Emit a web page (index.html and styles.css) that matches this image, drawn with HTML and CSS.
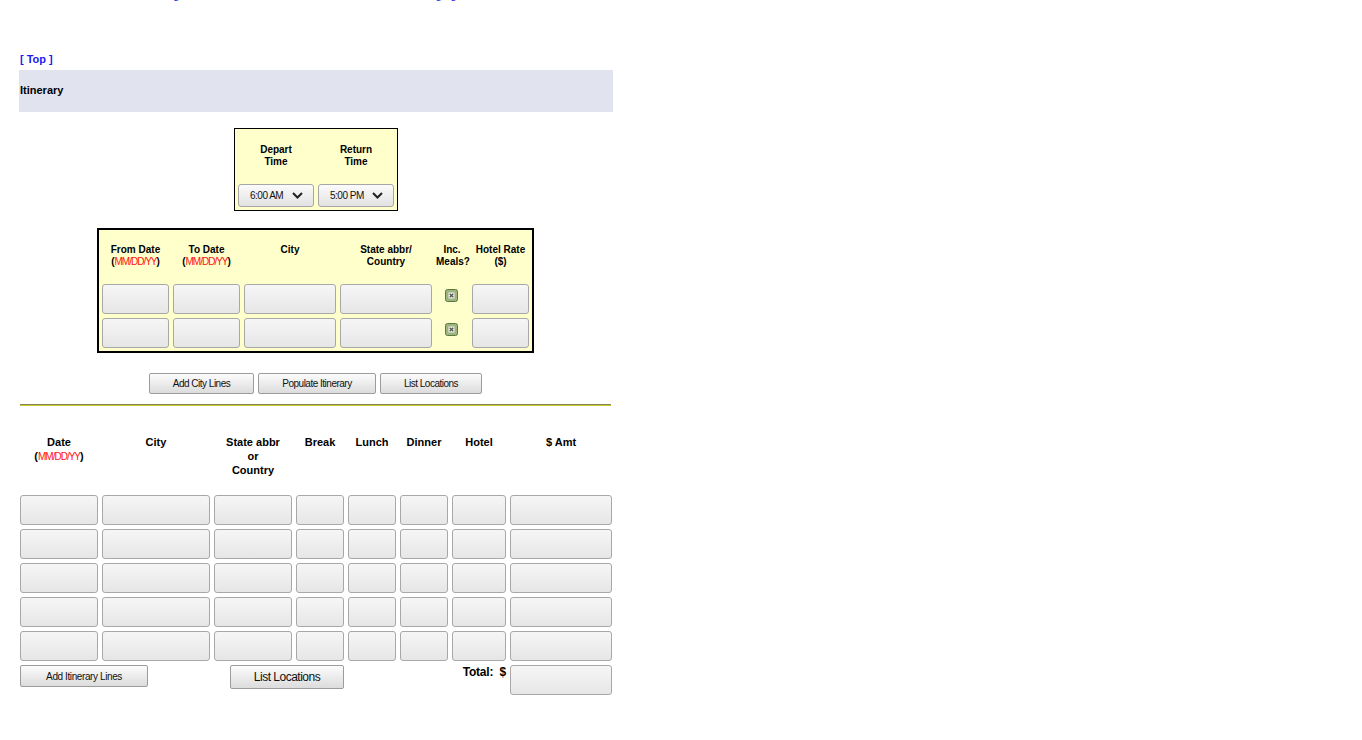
FILE: index.html
```html
<!DOCTYPE html>
<html>
<head>
<meta charset="utf-8">
<title>Itinerary</title>
<link rel="stylesheet" href="styles.css">
</head>
<body>
<div class="page">
  <div class="toplinks">
    <a class="tl tl1" href="#">Mileage</a>
    <a class="tl tl2" href="#">Per Diem</a>
    <a class="tl tl3" href="#">Lodging</a>
  </div>

  <div class="toplink"><a href="#">[ Top ]</a></div>

  <div class="band">Itinerary</div>

  <div class="timebox">
    <div class="timegrid">
      <div class="th">Depart<br>Time</div>
      <div class="th">Return<br>Time</div>
      <div class="select"><span>6:00 AM</span><svg width="11" height="7" viewBox="0 0 11 7"><path d="M1 1 L5.5 5.5 L10 1" fill="none" stroke="#222" stroke-width="2"/></svg></div>
      <div class="select"><span>5:00 PM</span><svg width="11" height="7" viewBox="0 0 11 7"><path d="M1 1 L5.5 5.5 L10 1" fill="none" stroke="#222" stroke-width="2"/></svg></div>
    </div>
  </div>

  <div class="citybox">
    <div class="citygrid">
      <div class="th">From Date<br>(<span class="fmt">MM/DD/YY</span>)</div>
      <div class="th">To Date<br>(<span class="fmt">MM/DD/YY</span>)</div>
      <div class="th">City</div>
      <div class="th">State abbr/<br>Country</div>
      <div class="th">Inc.<br>Meals?</div>
      <div class="th">Hotel Rate<br>($)</div>

      <input class="fld" type="text"><input class="fld" type="text"><input class="fld" type="text"><input class="fld" type="text">
      <div class="chk"><svg width="13" height="13" viewBox="0 0 13 13"><rect x="0.5" y="0.5" width="12" height="12" rx="2" fill="#9db47f" stroke="#5b7a42"/><rect x="3.5" y="3.5" width="6" height="6" fill="#f0f0ee"/><path d="M4.7 4.7 L8.3 8.3 M8.3 4.7 L4.7 8.3" stroke="#555" stroke-width="1.3"/></svg></div>
      <input class="fld" type="text">

      <input class="fld" type="text"><input class="fld" type="text"><input class="fld" type="text"><input class="fld" type="text">
      <div class="chk"><svg width="13" height="13" viewBox="0 0 13 13"><rect x="0.5" y="0.5" width="12" height="12" rx="2" fill="#9db47f" stroke="#5b7a42"/><rect x="3.5" y="3.5" width="6" height="6" fill="#f0f0ee"/><path d="M4.7 4.7 L8.3 8.3 M8.3 4.7 L4.7 8.3" stroke="#555" stroke-width="1.3"/></svg></div>
      <input class="fld" type="text">
    </div>
  </div>

  <div class="btnrow">
    <button class="btn b1">Add City Lines</button>
    <button class="btn b2">Populate Itinerary</button>
    <button class="btn b3">List Locations</button>
  </div>

  <div class="rule"></div>

  <div class="itgrid">
    <div class="ih">Date<br>(<span class="fmt">MM/DD/YY</span>)</div>
    <div class="ih">City</div>
    <div class="ih">State abbr<br>or<br>Country</div>
    <div class="ih">Break</div>
    <div class="ih">Lunch</div>
    <div class="ih">Dinner</div>
    <div class="ih">Hotel</div>
    <div class="ih">$ Amt</div>

    <input class="fld" type="text"><input class="fld" type="text"><input class="fld" type="text"><input class="fld" type="text"><input class="fld" type="text"><input class="fld" type="text"><input class="fld" type="text"><input class="fld" type="text">
    <input class="fld" type="text"><input class="fld" type="text"><input class="fld" type="text"><input class="fld" type="text"><input class="fld" type="text"><input class="fld" type="text"><input class="fld" type="text"><input class="fld" type="text">
    <input class="fld" type="text"><input class="fld" type="text"><input class="fld" type="text"><input class="fld" type="text"><input class="fld" type="text"><input class="fld" type="text"><input class="fld" type="text"><input class="fld" type="text">
    <input class="fld" type="text"><input class="fld" type="text"><input class="fld" type="text"><input class="fld" type="text"><input class="fld" type="text"><input class="fld" type="text"><input class="fld" type="text"><input class="fld" type="text">
    <input class="fld" type="text"><input class="fld" type="text"><input class="fld" type="text"><input class="fld" type="text"><input class="fld" type="text"><input class="fld" type="text"><input class="fld" type="text"><input class="fld" type="text">
  </div>

  <div class="footer">
    <button class="btn b4">Add Itinerary Lines</button>
    <button class="btn b5">List Locations</button>
    <div class="total">Total:&nbsp;&nbsp;$</div>
    <input class="fld totfld" type="text">
  </div>
</div>
</body>
</html>
```

FILE: styles.css
```css
html, body {
  margin: 0;
  padding: 0;
  background: #fff;
}
body {
  font-family: "Liberation Sans", Arial, sans-serif;
  color: #000;
}
.page {
  width: 594px;
  margin-left: 19px;
}

/* cut-off links at very top */
.toplinks {
  margin-top: -11px;
  height: 13px;
  line-height: 13px;
  font-size: 11px;
  white-space: nowrap;
  display: flex;
}
.tl {
  color: #1a1aee;
  text-decoration: none;
}
.tl1 { margin-left: 128px; }
.tl2 { margin-left: 118px; }
.tl3 { margin-left: 68px; }

.toplink {
  margin-top: 51px;
  padding-left: 1px;
  font-size: 11px;
  line-height: 13px;
  font-weight: bold;
}
.toplink a {
  color: #1a1aee;
  text-decoration: none;
}

.band {
  margin-top: 4px;
  height: 42px;
  box-sizing: border-box;
  padding: 14px 1px 0;
  background: #e1e4ee;
  font-size: 11px;
  line-height: 13px;
  font-weight: bold;
}

/* time box */
.timebox {
  width: 164px;
  box-sizing: border-box;
  margin: 16px 0 0 215px;
  border: 1px solid #000;
  background: #ffffcc;
  padding: 15px 3px 3px;
}
.timegrid {
  display: grid;
  grid-template-columns: 76px 76px;
  column-gap: 4px;
  row-gap: 16px;
}
.th {
  font-size: 10px;
  line-height: 12px;
  font-weight: bold;
  text-align: center;
  height: 24px;
}
.select {
  height: 23px;
  box-sizing: border-box;
  border: 1px solid #a6a6a6;
  border-radius: 3px;
  background: linear-gradient(#fbfbfb, #e2e2e2);
  display: flex;
  align-items: center;
  justify-content: space-between;
  padding: 0 10px 0 11px;
  font-size: 10px;
  letter-spacing: -0.5px;
  color: #111;
}
.select svg { display: block; }

/* city box */
.citybox {
  width: 437px;
  box-sizing: border-box;
  margin: 17px 0 0 78px;
  border: 2px solid #000;
  background: #ffffcc;
  padding: 14px 3px 3px;
}
.citygrid {
  display: grid;
  grid-template-columns: 67px 67px 92px 92px 32px 57px;
  column-gap: 4px;
  row-gap: 4px;
}
.citygrid .th {
  margin-bottom: 12px;
}
.fmt {
  color: #ff1010;
  font-weight: normal;
  font-size: 10px;
  letter-spacing: -1px;
}
.fld {
  display: block;
  width: 100%;
  height: 30px;
  box-sizing: border-box;
  margin: 0;
  padding: 0;
  border: 1px solid #a8a8a8;
  border-radius: 3px;
  background: linear-gradient(#f6f6f6, #e6e6e6);
  font-family: "Liberation Sans", Arial, sans-serif;
}
.chk {
  display: flex;
  justify-content: center;
  align-items: flex-start;
  padding-top: 5px;
  padding-right: 1px;
}
.chk svg { display: block; }

/* buttons */
.btnrow {
  display: flex;
  gap: 4px;
  margin-top: 20px;
  padding-left: 130px;
}
.btn {
  margin: 0;
  padding: 0;
  height: 21px;
  box-sizing: border-box;
  border: 1px solid #9c9c9c;
  border-radius: 2px;
  background: linear-gradient(#fcfcfc, #dcdcdc);
  font-family: "Liberation Sans", Arial, sans-serif;
  font-size: 10px;
  letter-spacing: -0.5px;
  color: #111;
}
.b1 { width: 105px; }
.b2 { width: 118px; }
.b3 { width: 102px; }

.rule {
  margin: 10px 2px 0 1px;
  height: 1px;
  background: #86865a;
  border-bottom: 1px solid #c8c828;
}

/* itinerary grid */
.itgrid {
  margin-top: 29px;
  padding-left: 1px;
  display: grid;
  grid-template-columns: 78px 108px 78px 48px 48px 48px 54px 102px;
  column-gap: 4px;
  row-gap: 4px;
}
.ih {
  font-size: 11px;
  line-height: 14px;
  font-weight: bold;
  text-align: center;
  height: 42px;
  margin-bottom: 14px;
}

.footer {
  margin-top: 4px;
  padding: 0 1px;
  display: flex;
  align-items: flex-start;
}
.b4 {
  width: 128px;
  height: 22px;
  letter-spacing: -0.4px;
}
.b5 {
  width: 114px;
  height: 24px;
  margin-left: 82px;
  font-size: 12px;
  letter-spacing: -0.5px;
}
.total {
  flex: 1;
  text-align: right;
  font-size: 12px;
  font-weight: bold;
  line-height: 14px;
  letter-spacing: -0.2px;
}
.totfld {
  width: 102px;
  margin-left: 4px;
}
```
